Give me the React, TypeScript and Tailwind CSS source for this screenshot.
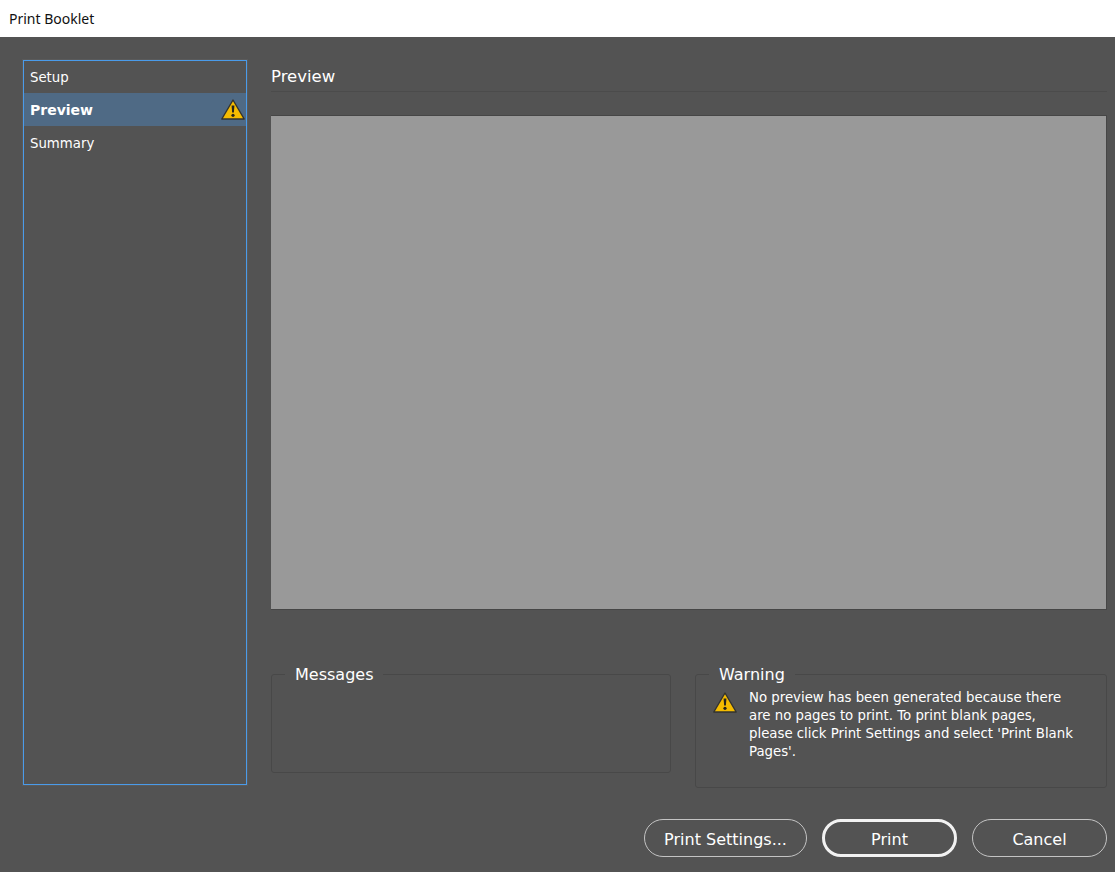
const BODY_FONT = "font-['DejaVu_Sans','Noto_Sans',sans-serif]";

function WarningIcon({ className }: { className: string }) {
  return (
    <svg viewBox="0 0 24 21" className={className}>
      <path d="M12 1 L23.2 20 L0.8 20 Z" fill="#f5bc00" stroke="#33332f" strokeWidth="1.4" strokeLinejoin="round" />
      <path d="M10.6 6.5 H13.4 L12.9 13.6 H11.1 Z" fill="#26241c" />
      <circle cx="12" cy="16.3" r="1.6" fill="#26241c" />
    </svg>
  );
}

function GroupBox({ title, className, children }: { title: string; className: string; children?: React.ReactNode }) {
  return (
    <fieldset className={`rounded-[3px] border border-[#484848] ${className}`}>
      <legend className="ml-[13px] px-[10px] pt-[2px] text-[16px] leading-[22px] text-white">{title}</legend>
      {children}
    </fieldset>
  );
}

function DialogButton({ label, width, primary }: { label: string; width: string; primary?: boolean }) {
  return (
    <button
      className={`h-[38px] rounded-full pt-[3px] text-[16px] text-white ${width} ${
        primary ? 'border-[3px] border-[#f2f2f2]' : 'border border-[#c4c4c4]'
      }`}
    >
      {label}
    </button>
  );
}

export default function App() {
  return (
    <div className={`flex h-[872px] w-[1115px] flex-col overflow-hidden bg-[#535353] ${BODY_FONT}`}>
      <div className="flex h-[37px] shrink-0 items-center bg-white pl-[9px] font-['Noto_Sans',sans-serif] text-[14px] text-[#111111]">
        Print Booklet
      </div>

      <div className="flex flex-1 pl-[23px] pr-[8px] pt-[23px]">
        {/* Step list */}
        <div className="h-[725px] w-[224px] shrink-0 border border-[#4a9bea] text-[13.3px] text-white shadow-[0_0_0_1px_#5a5a5a]">
          <div className="flex h-[32px] items-center pl-[6px] pt-[2px]">Setup</div>
          <div className="flex h-[33px] items-center justify-between bg-[#4f6a85] pl-[6px] pr-px text-[14px] font-bold">
            <span className="pt-px">Preview</span>
            <WarningIcon className="h-[21px] w-[24px]" />
          </div>
          <div className="flex h-[33px] items-center pl-[6px] pt-[3px]">Summary</div>
        </div>

        <div className="ml-[24px] flex min-w-0 flex-1 flex-col">
          <div className="flex h-[32px] shrink-0 items-center border-b border-[#4b4b4b] pt-[3px] text-[16.5px] text-white">
            Preview
          </div>
          <div className="mt-[23px] h-[495px] shrink-0 border-y border-r border-[#464646] bg-[#999999]" />

          <div className="mt-[52px] flex items-start gap-[24px]">
            <GroupBox title="Messages" className="h-[111px] w-[400px]" />
            <GroupBox title="Warning" className="h-[126px] w-[412px]">
              <div className="flex pl-[17px]">
                <WarningIcon className="mt-[6px] h-[21px] w-[24px] shrink-0" />
                <p className="ml-[12px] mt-[3px] w-[326px] text-[13.3px] leading-[18px] text-white">
                  No preview has been generated because there are no pages to print. To print blank pages, please click
                  Print Settings and select 'Print Blank Pages'.
                </p>
              </div>
            </GroupBox>
          </div>

          <div className="mt-[31px] flex justify-end gap-[15px]">
            <DialogButton label="Print Settings..." width="w-[163px]" />
            <DialogButton label="Print" width="w-[135px]" primary />
            <DialogButton label="Cancel" width="w-[135px]" />
          </div>
        </div>
      </div>
    </div>
  );
}
